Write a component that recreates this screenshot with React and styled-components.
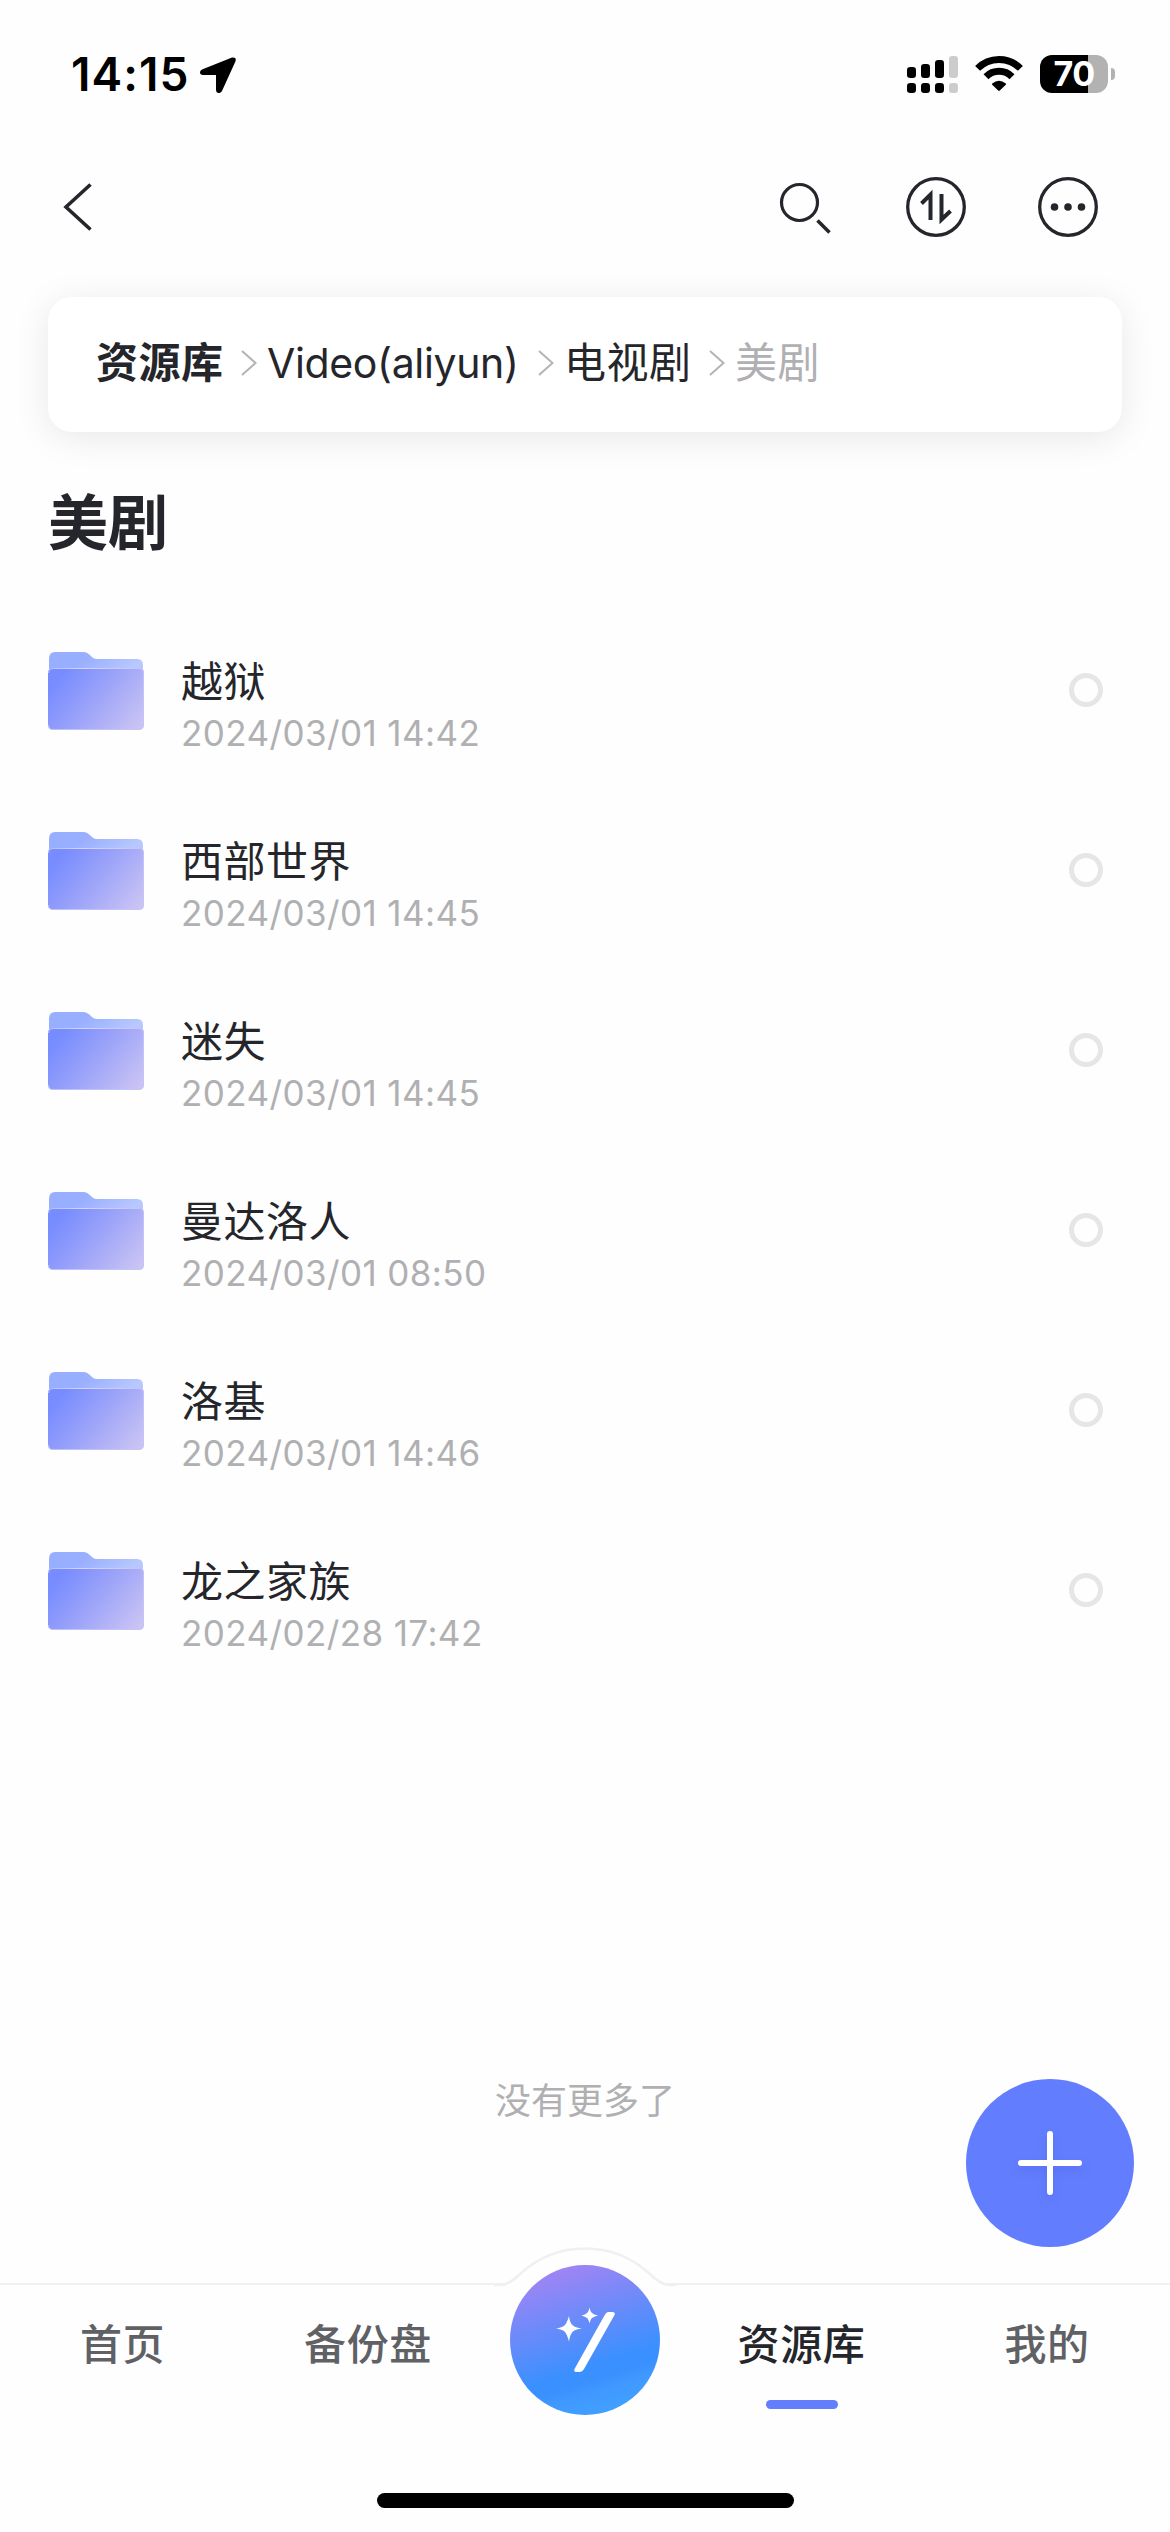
import React from 'react';
import styled, { createGlobalStyle } from 'styled-components';

const GlobalStyle = createGlobalStyle`
  * {
    box-sizing: border-box;
  }
  body {
    margin: 0;
    background: #fefefe;
    color: #25262b;
    font-family: Inter, 'Noto Sans CJK SC', sans-serif;
  }
  svg {
    display: block;
  }
`;

const Page = styled.div`
  position: relative;
  display: flex;
  flex-direction: column;
  width: 1170px;
  height: 2532px;
  overflow: hidden;
`;

const StatusBar = styled.header`
  display: flex;
  justify-content: space-between;
  height: 141px;
  padding: 55px 55px 0 71px;
  color: #000;
`;

const StatusGroup = styled.div`
  display: flex;
  align-items: center;
  height: 38px;
`;

const Time = styled.span`
  width: 129px;
  font-size: 46px;
  font-weight: 600;
  line-height: 38px;
  letter-spacing: 1.1px;
`;

const Battery = styled.div`
  display: flex;
  align-items: center;
  margin-left: 17px;
`;

const BatteryBody = styled.div`
  width: 68px;
  height: 38px;
  border-radius: 12px;
  background: linear-gradient(90deg, #000 48px, #b2b2b2 48px);
  color: #fff;
  font-size: 34px;
  font-weight: 700;
  line-height: 38px;
  text-align: center;
  letter-spacing: -0.5px;
`;

const BatteryCap = styled.div`
  width: 4px;
  height: 12px;
  margin-left: 3px;
  border-radius: 0 4px 4px 0;
  background: #b2b2b2;
`;

const SignalIcon = styled.svg`
  margin-right: 17px;
`;

const NavBar = styled.nav`
  display: flex;
  align-items: center;
  justify-content: space-between;
  height: 132px;
  padding: 0 72px 0 62px;
`;

const NavActions = styled.div`
  display: flex;
  align-items: center;
  gap: 72px;
`;

const IconButton = styled.button`
  padding: 0;
  border: 0;
  background: none;
  color: #25262b;
`;

const Breadcrumb = styled.div`
  display: flex;
  align-items: center;
  height: 135px;
  margin: 24px 48px 0;
  padding: 0 48px 4px;
  border-radius: 24px;
  background: #fff;
  box-shadow: 0 6px 36px rgba(0, 0, 0, 0.09);
`;

const Crumb = styled.span`
  width: ${({ $width }) => $width}px;
  color: ${({ $current }) => ($current ? '#b0b0b2' : '#25262b')};
  font-size: ${({ $latin }) => ($latin ? 41 : 42)}px;
  font-weight: ${({ $root }) => ($root ? 700 : 400)};
  line-height: 60px;
  letter-spacing: ${({ $latin }) => ($latin ? -0.35 : 0.5)}px;
  white-space: nowrap;
`;

const CrumbArrow = styled.svg`
  flex: none;
  margin: 0 10px 0 0;
`;

const Title = styled.h1`
  height: 88px;
  margin: 46px 48px 0;
  font-size: 60px;
  font-weight: 700;
  line-height: 90px;
`;

const FileList = styled.ul`
  flex: 1;
  margin: 34px 0 0;
  padding: 0;
  list-style: none;
`;

const FileRow = styled.li`
  display: flex;
  align-items: center;
  height: 180px;
  padding: 0 67px 0 48px;
`;

const FolderSvg = styled.svg`
  margin-top: 2px;
`;

const FileInfo = styled.div`
  flex: 1;
  margin-left: 37px;
  padding-top: 30px;
`;

const FileName = styled.div`
  font-size: 42px;
  line-height: 56px;
  letter-spacing: 0.5px;
`;

const FileDate = styled.div`
  color: #b0b0b2;
  font-size: 35px;
  line-height: 46px;
  letter-spacing: 0.4px;
`;

const Radio = styled.span`
  width: 34px;
  height: 34px;
  border: 5px solid #e6e6e8;
  border-radius: 50%;
`;

const ListEnd = styled.div`
  height: 209px;
  color: #b0b0b2;
  font-size: 36px;
  line-height: 54px;
  text-align: center;
`;

const AddButton = styled.button`
  position: absolute;
  right: 36px;
  bottom: 285px;
  display: flex;
  align-items: center;
  justify-content: center;
  width: 168px;
  height: 168px;
  padding: 0;
  border: 0;
  border-radius: 50%;
  background: #627eff;

  svg {
    filter: drop-shadow(0 5px 5px rgba(60, 70, 200, 0.25));
  }
`;

const TabBar = styled.footer`
  display: grid;
  grid-template-columns: 245px 246px 188px 245px 246px;
  height: 175px;
  border-top: 2px solid #f0f0f0;
`;

const Tab = styled.div`
  display: flex;
  flex-direction: column;
  align-items: center;
  padding-top: 29px;
  color: ${({ $active }) => ($active ? '#25262b' : '#606165')};
  font-size: 42px;
  font-weight: 500;
  line-height: 62px;
  letter-spacing: 0.6px;

  &::after {
    content: '';
    width: 72px;
    height: 9px;
    margin-top: 24px;
    border-radius: 5px;
    background: ${({ $active }) => ($active ? '#627eff' : 'transparent')};
  }
`;

const WandTab = styled.div`
  margin-top: -42px;
`;

const HomeArea = styled.div`
  display: flex;
  justify-content: center;
  height: 74px;
  padding-top: 35px;
`;

const HomeIndicator = styled.div`
  width: 417px;
  height: 15px;
  border-radius: 8px;
  background: #000;
`;

const files = [
  { name: '越狱', date: '2024/03/01 14:42' },
  { name: '西部世界', date: '2024/03/01 14:45' },
  { name: '迷失', date: '2024/03/01 14:45' },
  { name: '曼达洛人', date: '2024/03/01 08:50' },
  { name: '洛基', date: '2024/03/01 14:46' },
  { name: '龙之家族', date: '2024/02/28 17:42' }
];

const Signal = () => (
  <SignalIcon width="51" height="38" viewBox="0 0 51 38">
    <rect x="0" y="12" width="9" height="11" rx="3.2" />
    <rect x="14" y="9" width="9" height="14" rx="3.2" />
    <rect x="28" y="5" width="9" height="18" rx="3.2" />
    <rect x="42" y="1" width="9" height="22" rx="3.2" fill="#ccc" />
    <rect x="0" y="28" width="9" height="10" rx="3.2" />
    <rect x="14" y="28" width="9" height="10" rx="3.2" />
    <rect x="28" y="28" width="9" height="10" rx="3.2" />
    <rect x="42" y="28" width="9" height="10" rx="3.2" fill="#ccc" />
  </SignalIcon>
);

const Wifi = () => (
  <svg width="48" height="38" viewBox="0 0 48 38">
    <g fill="none" stroke="#000" strokeWidth="7">
      <path d="M2.6 13.4A30 30 0 0 1 45.4 13.4" />
      <path d="M11 21.7A18.4 18.4 0 0 1 37 21.7" />
    </g>
    <path d="M17.2 28.6Q24 23 30.8 28.6Q31.3 29.2 30.8 29.8L24.8 35.6Q24 36.2 23.2 35.6L17.2 29.8Q16.7 29.2 17.2 28.6Z" />
  </svg>
);

const FolderIcon = () => (
  <FolderSvg width="96" height="78" viewBox="0 0 96 78">
    <defs>
      <linearGradient id="folderBack" x1="0" y1="0" x2="1" y2="0.3">
        <stop offset="0.4" stopColor="#98aeff" />
        <stop offset="1" stopColor="#b8c8ff" />
      </linearGradient>
      <linearGradient
        id="folderFront"
        gradientUnits="userSpaceOnUse"
        x1="14"
        y1="22"
        x2="88"
        y2="82"
      >
        <stop offset="0" stopColor="#778cff" />
        <stop offset="0.5" stopColor="#a1a7f8" />
        <stop offset="1" stopColor="#ccc5f4" />
      </linearGradient>
      <linearGradient id="folderEdge" x1="0" y1="0" x2="1" y2="0">
        <stop offset="0" stopColor="#b3bbfd" />
        <stop offset="0.35" stopColor="#d6d3fb" />
        <stop offset="1" stopColor="#c6c2f6" />
      </linearGradient>
    </defs>
    <path
      d="M1 24V7Q1 0 7 0H35C42 0 43 7 49 7H89Q95 7 95 13V24Z"
      fill="url(#folderBack)"
    />
    <rect x="0" y="16" width="96" height="62" rx="5" fill="url(#folderFront)" />
    <path
      d="M0.5 21Q0.5 16.5 5 16.5H91Q95.5 16.5 95.5 21"
      fill="none"
      stroke="url(#folderEdge)"
      strokeWidth="1.2"
    />
    <path
      d="M0.5 73Q0.5 77.5 5 77.5H91Q95.5 77.5 95.5 73V21"
      fill="none"
      stroke="#c3c4fa"
      strokeWidth="0.9"
    />
  </FolderSvg>
);

const Arrow = () => (
  <CrumbArrow width="16" height="26" viewBox="0 0 16 26">
    <path
      d="M1 1L14.5 13L1 25"
      fill="none"
      stroke="#b4b4b6"
      strokeWidth="2"
    />
  </CrumbArrow>
);

const WandIcon = () => (
  <svg width="188" height="174" viewBox="0 0 188 174">
    <defs>
      <linearGradient
        id="wand"
        gradientUnits="userSpaceOnUse"
        x1="66"
        y1="24"
        x2="112"
        y2="168"
      >
        <stop offset="0" stopColor="#a284f4" />
        <stop offset="0.7" stopColor="#3a90ff" />
        <stop offset="0.78" stopColor="#3a90ff" />
        <stop offset="0.87" stopColor="#4099ff" />
        <stop offset="1" stopColor="#419fff" />
      </linearGradient>
    </defs>
    <path
      d="M3 42H9C17 42 23 37 29 31Q57 5.5 94 5.5T159 31C165 37 171 42 179 42H185V60H3Z"
      fill="#fefefe"
    />
    <path
      d="M3 42H9C17 42 23 37 29 31Q57 5.5 94 5.5T159 31C165 37 171 42 179 42H185"
      fill="none"
      stroke="#f0f0f0"
      strokeWidth="2.6"
    />
    <circle cx="94" cy="97" r="75" fill="url(#wand)" />
    <g fill="#fff">
      <path d="M78 73Q79 81 82 82.5Q84 84.5 91 85.5Q84 86.5 82 88.5Q79 91 78 98.5Q76 91 73.5 88.5Q71 86.5 65 85.5Q71 84.5 73.5 82.5Q76 80 78 73Z" />
      <path d="M98.5 64.5Q99.5 69 101 70Q102.5 71.5 107 72.5Q102.5 73.5 101 75Q99.5 76 98.5 80.5Q97.5 76 96 75Q94.5 73.5 90.5 72.5Q94.5 71.5 96 70Q97.5 69 98.5 64.5Z" />
      <path d="M117 69H122Q124.5 69.5 123.5 72L93 126Q91.500 129 89 129H85Q82.500 128.5 83.5 126L114 71.5Q115.500 69 117 69Z" />
    </g>
  </svg>
);

const App = () => (
  <>
    <GlobalStyle />
    <Page>
      <StatusBar>
        <StatusGroup>
          <Time>14:15</Time>
          <svg width="36" height="38" viewBox="0 0 36 38">
            <path d="M32 2.5Q37 2 35.4 6.5L22 36Q20.5 38.5 18 38Q16 37.5 16 35V20H3Q0 20 0 17.3Q0 15.5 2 14.6Z" />
          </svg>
        </StatusGroup>
        <StatusGroup>
          <Signal />
          <Wifi />
          <Battery>
            <BatteryBody>70</BatteryBody>
            <BatteryCap />
          </Battery>
        </StatusGroup>
      </StatusBar>

      <NavBar>
        <IconButton aria-label="返回">
          <svg width="32" height="50" viewBox="0 0 32 50" fill="none">
            <path
              d="M28.5 2.5L4 25L28.5 47.5"
              stroke="currentColor"
              strokeWidth="3.6"
            />
          </svg>
        </IconButton>
        <NavActions>
          <IconButton aria-label="搜索">
            <svg width="60" height="60" viewBox="0 0 60 60" fill="none" stroke="currentColor">
              <circle cx="25.5" cy="25.5" r="18" strokeWidth="3.2" />
              <path d="M43.5 43.5L55.5 55.5" strokeWidth="3.6" />
            </svg>
          </IconButton>
          <IconButton aria-label="排序">
            <svg width="60" height="60" viewBox="0 0 60 60" fill="none" stroke="currentColor">
              <circle cx="30" cy="30" r="28.3" strokeWidth="3.3" />
              <path d="M24.5 43V17.5L15.5 26.5" strokeWidth="4" />
              <path d="M35.5 17V42.5L44.5 34" strokeWidth="4" />
            </svg>
          </IconButton>
          <IconButton aria-label="更多">
            <svg width="60" height="60" viewBox="0 0 60 60" fill="currentColor">
              <circle
                cx="30"
                cy="30"
                r="28.3"
                fill="none"
                stroke="currentColor"
                strokeWidth="3.3"
              />
              <circle cx="16.5" cy="30" r="3.8" />
              <circle cx="30" cy="30" r="3.8" />
              <circle cx="43.5" cy="30" r="3.8" />
            </svg>
          </IconButton>
        </NavActions>
      </NavBar>

      <Breadcrumb>
        <Crumb $root $width={145}>
          资源库
        </Crumb>
        <Arrow />
        <Crumb $latin $width={271}>
          Video(aliyun)
        </Crumb>
        <Arrow />
        <Crumb $width={145}>电视剧</Crumb>
        <Arrow />
        <Crumb $current $width={90}>
          美剧
        </Crumb>
      </Breadcrumb>

      <Title>美剧</Title>

      <FileList>
        {files.map(({ name, date }) => (
          <FileRow key={name}>
            <FolderIcon />
            <FileInfo>
              <FileName>{name}</FileName>
              <FileDate>{date}</FileDate>
            </FileInfo>
            <Radio />
          </FileRow>
        ))}
      </FileList>

      <ListEnd>没有更多了</ListEnd>

      <AddButton aria-label="添加">
        <svg width="66" height="66" viewBox="0 0 66 66">
          <path
            d="M33 4V62M4 33H62"
            stroke="#fff"
            strokeWidth="6"
            strokeLinecap="round"
          />
        </svg>
      </AddButton>

      <TabBar>
        <Tab>首页</Tab>
        <Tab>备份盘</Tab>
        <WandTab>
          <WandIcon />
        </WandTab>
        <Tab $active>资源库</Tab>
        <Tab>我的</Tab>
      </TabBar>

      <HomeArea>
        <HomeIndicator />
      </HomeArea>
    </Page>
  </>
);

export default App;
